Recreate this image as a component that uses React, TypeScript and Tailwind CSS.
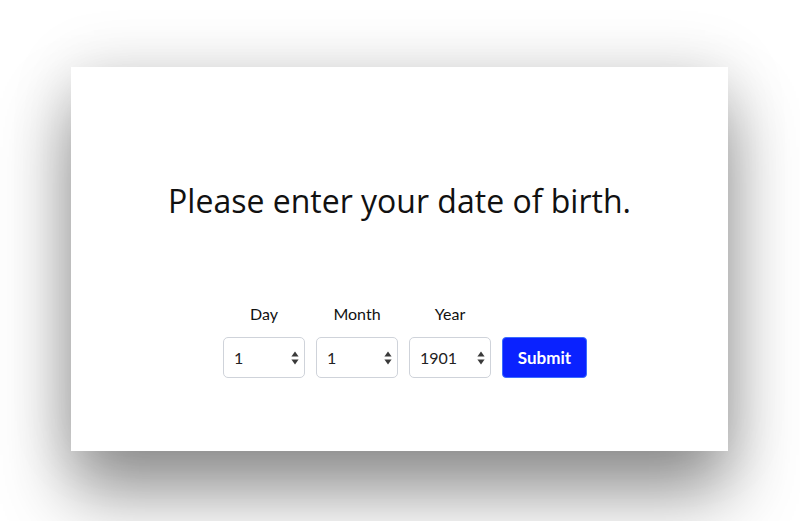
import React, { useState } from 'react'

const font = { fontFamily: 'Lato, "Noto Sans", sans-serif' }
const headFont = { fontFamily: '"Open Sans", Lato, sans-serif' }

function Arrows() {
    return (
        <svg width="8" height="14" viewBox="0 0 8 14" className="pointer-events-none absolute right-[6px] top-1/2 -translate-y-1/2">
            <path d="M4 0.5 L7.6 5.6 L0.4 5.6 Z" fill="#3a3a3a" />
            <path d="M4 13.5 L7.6 8.4 L0.4 8.4 Z" fill="#3a3a3a" />
        </svg>
    )
}

function Field({ label, value, options, onChange }: { label: string; value: string; options: string[]; onChange: (v: string) => void }) {
    return (
        <div className="flex flex-col items-center gap-[11px]">
            <label className="text-[16px] leading-[24px] text-[#111]">{label}</label>
            <div className="relative w-[82px] h-[41px]">
                <select
                    value={value}
                    onChange={(e) => onChange(e.target.value)}
                    className="appearance-none w-full h-full rounded-[5px] border border-[#cfd3da] bg-white pl-[10px] pr-6 text-[16px] text-[#222] outline-none"
                    style={font}
                >
                    {options.map((o) => (
                        <option key={o} value={o}>{o}</option>
                    ))}
                </select>
                <Arrows />
            </div>
        </div>
    )
}

export default function App() {
    const [day, setDay] = useState('1')
    const [month, setMonth] = useState('1')
    const [year, setYear] = useState('1901')

    const days = Array.from({ length: 31 }, (_, i) => String(i + 1))
    const months = Array.from({ length: 12 }, (_, i) => String(i + 1))
    const years = Array.from({ length: 120 }, (_, i) => String(1901 + i))

    return (
        <div className="w-[800px] h-[521px] bg-white overflow-hidden pt-[67px]" style={font}>
            <div className="ml-[71px] w-[657px] h-[384px] bg-white flex flex-col items-center pt-[115px] shadow-[0_42px_65px_0_rgba(0,0,0,0.42),0_0_60px_0_rgba(0,0,0,0.12)]">
                <h1 className="text-[32px] leading-[38px] text-[#111]" style={headFont}>Please enter your date of birth.</h1>
                <form className="mt-[82px] flex items-end gap-[11px] pl-[11px]" onSubmit={(e) => e.preventDefault()}>
                    <Field label="Day" value={day} options={days} onChange={setDay} />
                    <Field label="Month" value={month} options={months} onChange={setMonth} />
                    <Field label="Year" value={year} options={years} onChange={setYear} />
                    <button
                        type="submit"
                        className="w-[85px] h-[41px] rounded-[4px] border border-[#3a6cff] bg-[#0a22ff] text-white text-[17px] font-bold"
                    >
                        Submit
                    </button>
                </form>
            </div>
        </div>
    )
}
